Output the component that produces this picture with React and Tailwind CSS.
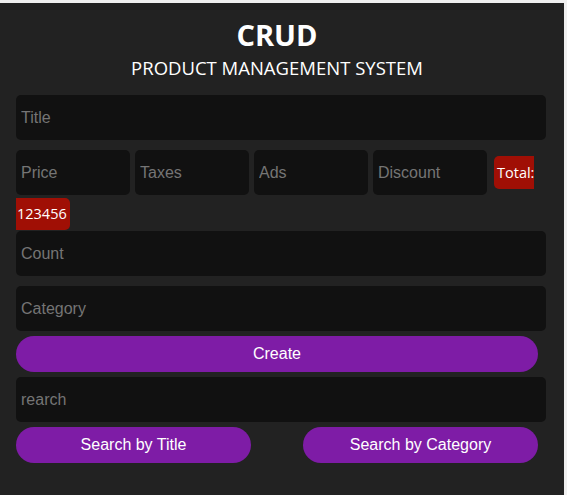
export default function App() {
  const inp =
    "h-[45px] rounded-[5px] bg-[#111111] px-[5px] text-[16px] text-white placeholder:text-[#757575] outline-none font-['Liberation_Sans',Arial,sans-serif]";
  const btn =
    "h-[36px] rounded-full bg-[#7e1ca6] text-white text-[16px] font-['Liberation_Sans',Arial,sans-serif]";
  return (
    <div className="bg-[#f0f0f0] pt-[3px]">
      <div className="w-[564px] min-h-[492px] bg-[#222222] px-4 pt-[16px]">
        <div className="flex w-[522px] flex-col items-center font-['Open_Sans',sans-serif] text-white">
          <h1 className="text-[29px] font-bold leading-[32px]">CRUD</h1>
          <p className="mt-[6px] text-[18.5px] leading-[22px]">PRODUCT MANAGEMENT SYSTEM</p>
        </div>
        <div className="mt-[16px] flex flex-col">
          <input className={`${inp} w-[530px]`} placeholder="Title" />
          <div className="mt-[10px] flex items-center gap-[5px]">
            <input className={`${inp} w-[114px]`} placeholder="Price" />
            <input className={`${inp} w-[114px]`} placeholder="Taxes" />
            <input className={`${inp} w-[114px]`} placeholder="Ads" />
            <input className={`${inp} w-[114px]`} placeholder="Discount" />
            <span className="ml-[2px] h-[33px] rounded-l-[5px] bg-[#a00f05] pl-[3px] pr-0 text-[14.5px] leading-[33px] text-white font-['Open_Sans',sans-serif]">
              Total:
            </span>
          </div>
          <div className="mt-[3px] flex">
            <span className="h-[32px] rounded-r-[5px] bg-[#a00f05] pl-[1px] pr-[3px] text-[14.5px] leading-[32px] text-white font-['Open_Sans',sans-serif]">
              123456
            </span>
          </div>
          <input className={`${inp} mt-px w-[530px]`} placeholder="Count" />
          <input className={`${inp} mt-[10px] w-[530px]`} placeholder="Category" />
          <button className={`${btn} mt-[5px] w-[522px]`}>Create</button>
          <input className={`${inp} mt-[5px] w-[530px]`} placeholder="rearch" />
          <div className="mt-[5px] flex w-[522px] justify-between">
            <button className={`${btn} w-[235px]`}>Search by Title</button>
            <button className={`${btn} w-[235px]`}>Search by Category</button>
          </div>
        </div>
      </div>
    </div>
  );
}
